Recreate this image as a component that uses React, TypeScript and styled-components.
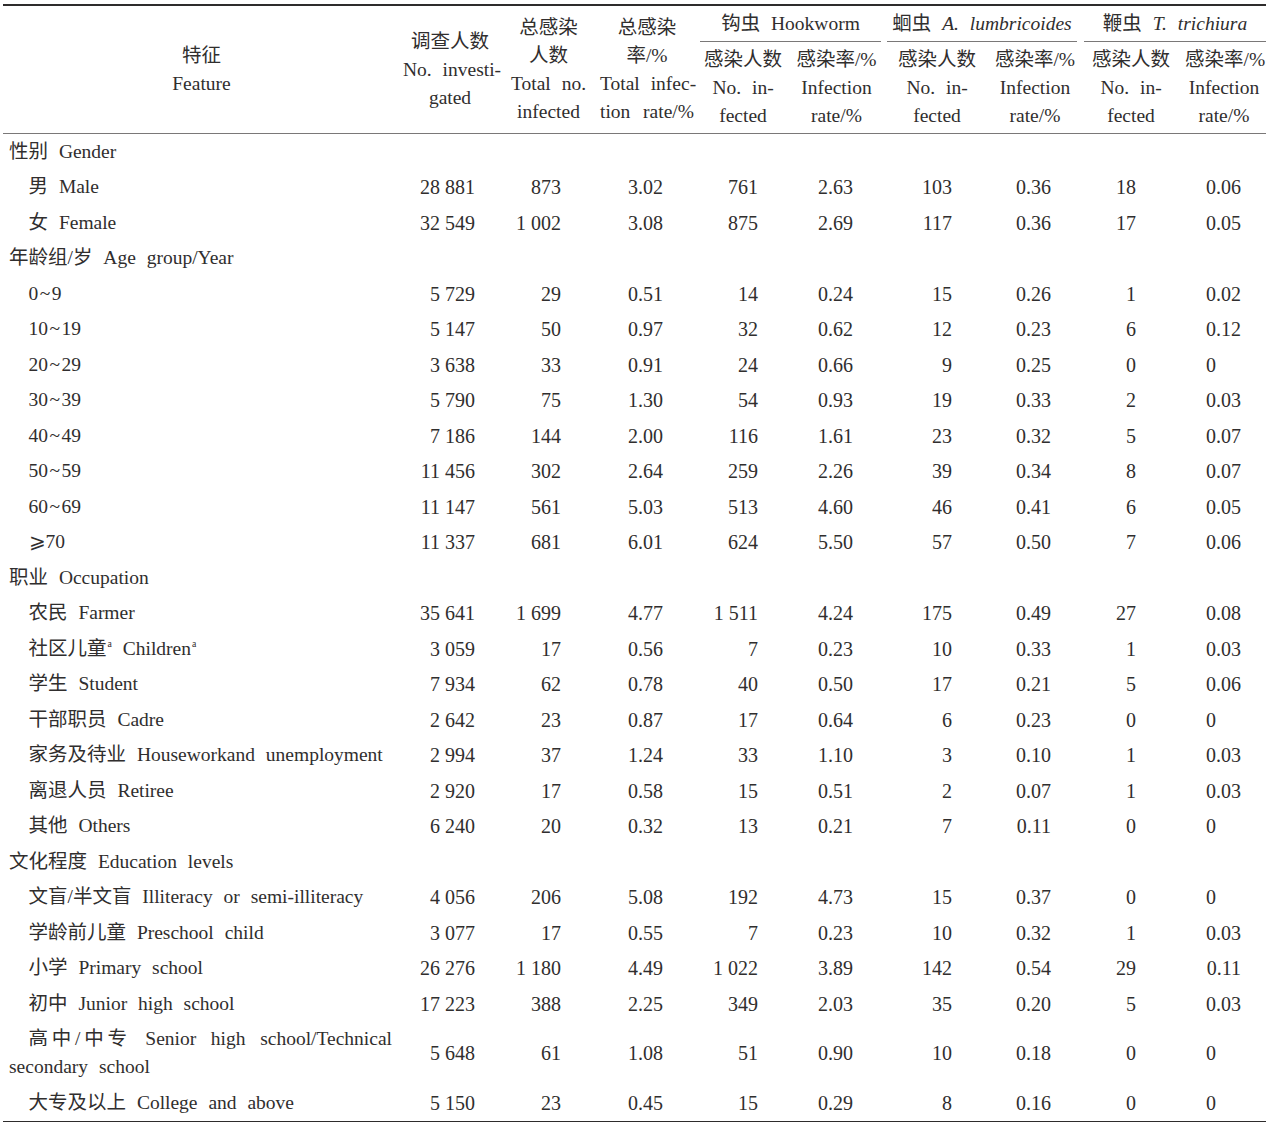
import React from "react";
import styled, { createGlobalStyle } from "styled-components";

const GlobalStyle = createGlobalStyle`
  html, body {
    margin: 0;
    padding: 0;
    background: #fff;
  }
  body {
    font-family: "Liberation Serif", "Noto Sans CJK SC", serif;
    color: #302e2e;
  }
`;

const Page = styled.div`
  padding: 4px 0 0 3px;
  width: 1268px;
  box-sizing: border-box;
`;

const Table = styled.table`
  width: 1263px;
  table-layout: fixed;
  border-collapse: collapse;
  border-top: 2.5px solid #2e2c2c;
  border-bottom: 2.5px solid #2e2c2c;
`;

const Head = styled.thead`
  border-bottom: 1.5px solid #7a7878;
`;

const HeadCell = styled.th`
  font-weight: normal;
  font-size: 19.5px;
  line-height: 28px;
  word-spacing: 6px;
  text-align: center;
  vertical-align: middle;
  padding: 0 3px;
`;

const SubCell = styled(HeadCell)`
  padding: 3.5px 3px;
`;

const GroupCell = styled.th`
  font-weight: normal;
  font-size: 19.5px;
  line-height: 28px;
  word-spacing: 6px;
  padding: 3.5px 0 0;
  vertical-align: top;
`;

const GroupTitle = styled.div<{ $last?: boolean }>`
  margin: ${(p) => (p.$last ? "0 0 0 4px" : "0 3px")};
  padding-bottom: 3.5px;
  border-bottom: 1.5px solid #7a7878;
  text-align: center;
  white-space: nowrap;
`;

const Line = styled.span<{ $justify?: boolean }>`
  display: block;
  white-space: nowrap;
  text-align: ${(p) => (p.$justify ? "justify" : "center")};
  text-align-last: ${(p) => (p.$justify ? "justify" : "center")};
`;

const LabelCell = styled.td<{ $indent?: boolean }>`
  font-size: 19.5px;
  line-height: 28px;
  word-spacing: 6px;
  padding: 3.75px 8px 3.75px 6px;
  text-align: justify;
  text-indent: ${(p) => (p.$indent ? "1em" : "0")};
  vertical-align: middle;
`;

const NumCell = styled.td<{ $pad: number; $bare: boolean }>`
  font-size: 20px;
  line-height: 28px;
  padding: 3.75px 0;
  padding-right: ${(p) => (p.$bare ? `calc(${p.$pad}px + 1.25em)` : `${p.$pad}px`)};
  text-align: right;
  vertical-align: middle;
  white-space: nowrap;
`;

const Sup = styled.sup`
  font-size: 0.5em;
  line-height: 0;
  vertical-align: 0.75em;
  margin-left: 1px;
`;

const Tilde = styled.span`
  margin: 0 1.5px;
`;

interface Column {
  width: number;
  pad?: number;
  rate?: boolean;
}

// widths and the right inset of the numbers, column by column
const columns: Column[] = [
  { width: 397 },
  { width: 100, pad: 25 },
  { width: 97, pad: 36 },
  { width: 100, pad: 34, rate: true },
  { width: 92, pad: 31 },
  { width: 95, pad: 31, rate: true },
  { width: 106, pad: 38 },
  { width: 90, pad: 29, rate: true },
  { width: 102, pad: 46 },
  { width: 84, pad: 25, rate: true },
];

type Row =
  | { kind: "group"; label: React.ReactNode }
  | { kind: "item"; label: React.ReactNode; values: string[] };

const age = (from: number, to: number) => (
  <>
    {from}
    <Tilde>~</Tilde>
    {to}
  </>
);

const rows: Row[] = [
  { kind: "group", label: "性别 Gender" },
  { kind: "item", label: "男 Male", values: ["28 881", "873", "3.02", "761", "2.63", "103", "0.36", "18", "0.06"] },
  { kind: "item", label: "女 Female", values: ["32 549", "1 002", "3.08", "875", "2.69", "117", "0.36", "17", "0.05"] },
  { kind: "group", label: "年龄组/岁 Age group/Year" },
  { kind: "item", label: age(0, 9), values: ["5 729", "29", "0.51", "14", "0.24", "15", "0.26", "1", "0.02"] },
  { kind: "item", label: age(10, 19), values: ["5 147", "50", "0.97", "32", "0.62", "12", "0.23", "6", "0.12"] },
  { kind: "item", label: age(20, 29), values: ["3 638", "33", "0.91", "24", "0.66", "9", "0.25", "0", "0"] },
  { kind: "item", label: age(30, 39), values: ["5 790", "75", "1.30", "54", "0.93", "19", "0.33", "2", "0.03"] },
  { kind: "item", label: age(40, 49), values: ["7 186", "144", "2.00", "116", "1.61", "23", "0.32", "5", "0.07"] },
  { kind: "item", label: age(50, 59), values: ["11 456", "302", "2.64", "259", "2.26", "39", "0.34", "8", "0.07"] },
  { kind: "item", label: age(60, 69), values: ["11 147", "561", "5.03", "513", "4.60", "46", "0.41", "6", "0.05"] },
  { kind: "item", label: "⩾70", values: ["11 337", "681", "6.01", "624", "5.50", "57", "0.50", "7", "0.06"] },
  { kind: "group", label: "职业 Occupation" },
  { kind: "item", label: "农民 Farmer", values: ["35 641", "1 699", "4.77", "1 511", "4.24", "175", "0.49", "27", "0.08"] },
  {
    kind: "item",
    label: (
      <>
        社区儿童<Sup>a</Sup> Children<Sup>a</Sup>
      </>
    ),
    values: ["3 059", "17", "0.56", "7", "0.23", "10", "0.33", "1", "0.03"],
  },
  { kind: "item", label: "学生 Student", values: ["7 934", "62", "0.78", "40", "0.50", "17", "0.21", "5", "0.06"] },
  { kind: "item", label: "干部职员 Cadre", values: ["2 642", "23", "0.87", "17", "0.64", "6", "0.23", "0", "0"] },
  { kind: "item", label: "家务及待业 Houseworkand unemployment", values: ["2 994", "37", "1.24", "33", "1.10", "3", "0.10", "1", "0.03"] },
  { kind: "item", label: "离退人员 Retiree", values: ["2 920", "17", "0.58", "15", "0.51", "2", "0.07", "1", "0.03"] },
  { kind: "item", label: "其他 Others", values: ["6 240", "20", "0.32", "13", "0.21", "7", "0.11", "0", "0"] },
  { kind: "group", label: "文化程度 Education levels" },
  { kind: "item", label: "文盲/半文盲 Illiteracy or semi-illiteracy", values: ["4 056", "206", "5.08", "192", "4.73", "15", "0.37", "0", "0"] },
  { kind: "item", label: "学龄前儿童 Preschool child", values: ["3 077", "17", "0.55", "7", "0.23", "10", "0.32", "1", "0.03"] },
  { kind: "item", label: "小学 Primary school", values: ["26 276", "1 180", "4.49", "1 022", "3.89", "142", "0.54", "29", "0.11"] },
  { kind: "item", label: "初中 Junior high school", values: ["17 223", "388", "2.25", "349", "2.03", "35", "0.20", "5", "0.03"] },
  {
    kind: "item",
    label: "高中/中专 Senior high school/Technical secondary school",
    values: ["5 648", "61", "1.08", "51", "0.90", "10", "0.18", "0", "0"],
  },
  { kind: "item", label: "大专及以上 College and above", values: ["5 150", "23", "0.45", "15", "0.29", "8", "0.16", "0", "0"] },
];

const groups = [
  { zh: "钩虫", en: "Hookworm", italic: false },
  { zh: "蛔虫", en: "A. lumbricoides", italic: true },
  { zh: "鞭虫", en: "T. trichiura", italic: true },
];

const App = () => {
  return (
    <Page>
      <GlobalStyle />
      <Table>
        <colgroup>
          {columns.map((c, i) => (
            <col key={i} style={{ width: c.width }} />
          ))}
        </colgroup>
        <Head>
          <tr>
            <HeadCell rowSpan={2}>
              <Line>特征</Line>
              <Line>Feature</Line>
            </HeadCell>
            <HeadCell rowSpan={2}>
              <Line>调查人数</Line>
              <Line $justify>No. investi-</Line>
              <Line>gated</Line>
            </HeadCell>
            <HeadCell rowSpan={2}>
              <Line>总感染</Line>
              <Line>人数</Line>
              <Line>Total no.</Line>
              <Line>infected</Line>
            </HeadCell>
            <HeadCell rowSpan={2}>
              <Line>总感染</Line>
              <Line>率/%</Line>
              <Line $justify>Total infec-</Line>
              <Line $justify>tion rate/%</Line>
            </HeadCell>
            {groups.map((g, i) => (
              <GroupCell key={g.en} colSpan={2}>
                <GroupTitle $last={i === groups.length - 1}>
                  {g.zh} {g.italic ? <i>{g.en}</i> : g.en}
                </GroupTitle>
              </GroupCell>
            ))}
          </tr>
          <tr>
            {groups.map((g) => (
              <React.Fragment key={g.en}>
                <SubCell>
                  <Line>感染人数</Line>
                  <Line>No. in-</Line>
                  <Line>fected</Line>
                </SubCell>
                <SubCell>
                  <Line>感染率/%</Line>
                  <Line>Infection</Line>
                  <Line>rate/%</Line>
                </SubCell>
              </React.Fragment>
            ))}
          </tr>
        </Head>
        <tbody>
          {rows.map((row, r) =>
            row.kind === "group" ? (
              <tr key={r}>
                <LabelCell colSpan={columns.length}>{row.label}</LabelCell>
              </tr>
            ) : (
              <tr key={r}>
                <LabelCell $indent>{row.label}</LabelCell>
                {row.values.map((v, i) => {
                  const col = columns[i + 1];
                  return (
                    <NumCell key={i} $pad={col.pad ?? 0} $bare={!!col.rate && v === "0"}>
                      {v}
                    </NumCell>
                  );
                })}
              </tr>
            )
          )}
        </tbody>
      </Table>
    </Page>
  );
};

export default App;
